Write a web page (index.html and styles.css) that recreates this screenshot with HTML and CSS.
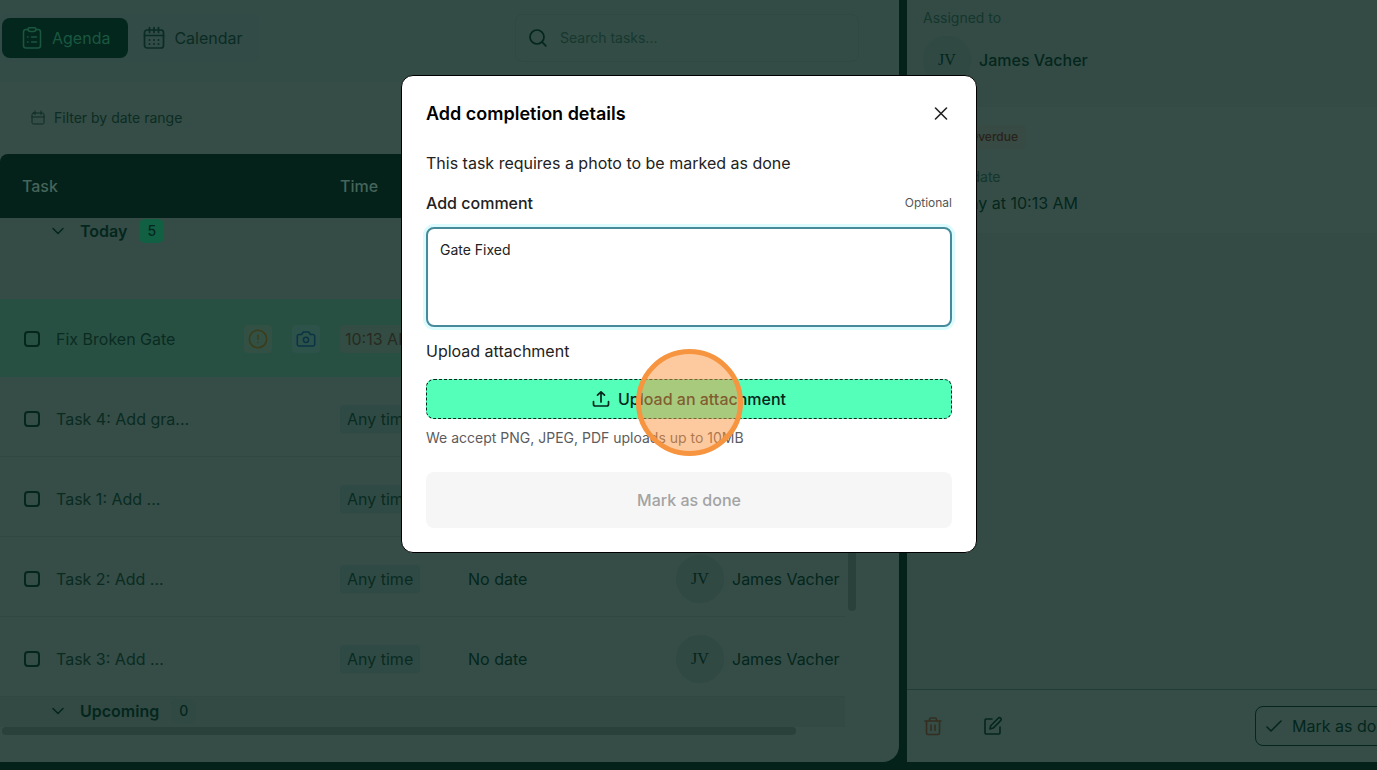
FILE: index.html
```html
<!DOCTYPE html>
<html lang="en">
<head>
    <meta charset="UTF-8">
    <meta name="viewport" content="width=device-width, initial-scale=1.0">
    <title>Agenda</title>
    <link rel="stylesheet" href="styles.css">
</head>
<body>

<div class="app">
    <!-- Task list -->
    <main class="tasks">
        <div class="topbar">
            <div class="tabs">
                <button type="button" class="tab active">
                    <svg width="24" height="24" viewBox="0 0 24 24" fill="none" stroke="currentColor" stroke-width="1.5" stroke-linecap="round" stroke-linejoin="round">
                        <path d="M8 3.500H6A2.500 2.500 0 0 0 3.500 6v13.500A2.500 2.500 0 0 0 6 22h12a2.500 2.500 0 0 0 2.500-2.500V6A2.500 2.500 0 0 0 18 3.500h-2"/>
                        <path d="M9.500 1.800h5A1.500 1.500 0 0 1 16 3.300c0 1.300-1 2.200-2.500 2.200h-3C9 5.500 8 4.600 8 3.300a1.500 1.500 0 0 1 1.500-1.500z"/>
                        <path d="M7.500 11h.5M7.500 16h.5M11.500 11h5M11.500 16h5"/>
                    </svg>
                    Agenda
                </button>
                <button type="button" class="tab">
                    <svg width="24" height="24" viewBox="0 0 24 24" fill="none" stroke="currentColor" stroke-width="1.700" stroke-linecap="round" stroke-linejoin="round">
                        <rect x="2.500" y="4" width="19" height="18" rx="2.500"/>
                        <path d="M2.500 9.500h19M7.500 1.500v5M12 1.500v5M16.500 1.500v5"/>
                        <path stroke-width="2" d="M7.500 14h.01M12 14h.01M16.500 14h.01M7.500 18h.01M12 18h.01M16.500 18h.01"/>
                    </svg>
                    Calendar
                </button>
            </div>
            <label class="search">
                <svg width="20" height="20" viewBox="0 0 20 20" fill="none" stroke="currentColor" stroke-width="1.700" stroke-linecap="round">
                    <circle cx="9" cy="9" r="7"/>
                    <path d="M14.200 14.200l3.600 3.600"/>
                </svg>
                <input type="search" placeholder="Search tasks..." aria-label="Search tasks">
            </label>
        </div>

        <div class="filters">
            <button type="button" class="filter">
                <svg width="16" height="16" viewBox="0 0 16 16" fill="none" stroke="currentColor" stroke-linecap="round" stroke-linejoin="round">
                    <rect x="2" y="3" width="12" height="11" rx="1.500"/>
                    <path d="M2 7h12M5 1v3.500M11 1v3.500"/>
                </svg>
                Filter by date range
            </button>
        </div>

        <div class="table-wrap">
            <table class="task-table">
                <colgroup>
                    <col class="col-task">
                    <col class="col-time">
                    <col class="col-date">
                    <col>
                </colgroup>
                <thead>
                    <tr><th class="first">Task</th><th>Time</th><th>Date</th><th>Assignee</th></tr>
                </thead>
                <tbody>
                    <tr class="group today">
                        <td colspan="4">
                            <div class="group-title">
                                <svg width="16" height="16" viewBox="0 0 16 16" fill="none" stroke="currentColor" stroke-width="1.500" stroke-linecap="round" stroke-linejoin="round"><path d="M3 5.500l5 5 5-5"/></svg>
                                Today <span class="count green">5</span>
                            </div>
                        </td>
                    </tr>
                    <tr class="row selected">
                        <td class="first">
                            <div class="task">
                                <input type="checkbox" aria-label="Fix Broken Gate">
                                <span class="name">Fix Broken Gate</span>
                                <span class="flag warning">
                                    <svg width="20" height="20" viewBox="0 0 20 20" fill="none" stroke="currentColor" stroke-width="1.500" stroke-linecap="round"><circle cx="10" cy="10" r="8.700"/><path d="M10 6v4.500M10 13.500v.01"/></svg>
                                </span>
                                <span class="flag photo">
                                    <svg width="20" height="20" viewBox="0 0 20 20" fill="none" stroke="currentColor" stroke-width="1.500" stroke-linejoin="round"><path d="M3 5.500h2.500L7.300 3h5.400l1.800 2.500H17A1.700 1.700 0 0 1 18.700 7.200v8A1.700 1.700 0 0 1 17 17H3a1.700 1.700 0 0 1-1.700-1.800v-8A1.700 1.700 0 0 1 3 5.500z"/><circle cx="10" cy="10.800" r="2.600"/></svg>
                                </span>
                            </div>
                        </td>
                        <td><span class="badge late">10:13 AM</span></td>
                        <td>Today</td>
                        <td><div class="person"><span class="avatar">JV</span>James Vacher</div></td>
                    </tr>
                    <tr class="row">
                        <td class="first"><div class="task"><input type="checkbox" aria-label="Task 4"><span class="name">Task 4: Add gra...</span></div></td>
                        <td><span class="badge">Any time</span></td>
                        <td>No date</td>
                        <td><div class="person"><span class="avatar">JV</span>James Vacher</div></td>
                    </tr>
                    <tr class="row">
                        <td class="first"><div class="task"><input type="checkbox" aria-label="Task 1"><span class="name">Task 1: Add ...</span></div></td>
                        <td><span class="badge">Any time</span></td>
                        <td>No date</td>
                        <td><div class="person"><span class="avatar">JV</span>James Vacher</div></td>
                    </tr>
                    <tr class="row">
                        <td class="first"><div class="task"><input type="checkbox" aria-label="Task 2"><span class="name">Task 2: Add ...</span></div></td>
                        <td><span class="badge">Any time</span></td>
                        <td>No date</td>
                        <td><div class="person"><span class="avatar">JV</span>James Vacher</div></td>
                    </tr>
                    <tr class="row">
                        <td class="first"><div class="task"><input type="checkbox" aria-label="Task 3"><span class="name">Task 3: Add ...</span></div></td>
                        <td><span class="badge">Any time</span></td>
                        <td>No date</td>
                        <td><div class="person"><span class="avatar">JV</span>James Vacher</div></td>
                    </tr>
                    <tr class="group upcoming">
                        <td colspan="4">
                            <div class="group-title">
                                <svg width="16" height="16" viewBox="0 0 16 16" fill="none" stroke="currentColor" stroke-width="1.500" stroke-linecap="round" stroke-linejoin="round"><path d="M3 5.500l5 5 5-5"/></svg>
                                Upcoming <span class="count">0</span>
                            </div>
                        </td>
                    </tr>
                </tbody>
            </table>
            <div class="scroll-y"><div class="thumb"></div></div>
        </div>
        <div class="scroll-x"><div class="thumb"></div></div>
    </main>

    <!-- Task details -->
    <aside class="details">
        <section class="assigned">
            <div class="small-label">Assigned to</div>
            <div class="person"><span class="avatar">JV</span>James Vacher</div>
        </section>
        <section class="due">
            <span class="overdue">
                <svg width="16" height="16" viewBox="0 0 20 20" fill="none" stroke="currentColor" stroke-width="1.500" stroke-linecap="round"><circle cx="10" cy="10" r="8"/><path d="M10 6v4.500M10 13.500v.01"/></svg>
                Overdue
            </span>
            <div class="small-label">Due date</div>
            <div class="due-date">Today at 10:13 AM</div>
        </section>
        <div class="details-body"></div>
        <footer class="details-footer">
            <button type="button" class="icon-btn delete" aria-label="Delete">
                <svg width="20" height="20" viewBox="0 0 20 20" fill="none" stroke="currentColor" stroke-width="1.600" stroke-linecap="round" stroke-linejoin="round"><path d="M2 5h16M6.500 5V3.500A1.500 1.500 0 0 1 8 2h4a1.500 1.500 0 0 1 1.500 1.500V5M3.500 5v12A1.500 1.500 0 0 0 5 18.500h10a1.500 1.500 0 0 0 1.500-1.500V5M8 9v5.500M12 9v5.500"/></svg>
            </button>
            <button type="button" class="icon-btn" aria-label="Edit">
                <svg width="20" height="20" viewBox="0 0 20 20" fill="none" stroke="currentColor" stroke-width="1.600" stroke-linecap="round" stroke-linejoin="round"><path d="M9 3H3.200A1.200 1.200 0 0 0 2 4.200v12.600A1.200 1.200 0 0 0 3.200 18h12.600a1.200 1.200 0 0 0 1.200-1.200V11"/><path d="M7 13l.7-3.300 7.500-7.500a1.600 1.600 0 0 1 2.400 0 1.600 1.600 0 0 1 0 2.400l-7.400 7.500z"/></svg>
            </button>
            <button type="button" class="done-btn">
                <svg width="16" height="16" viewBox="0 0 16 16" fill="none" stroke="currentColor" stroke-width="1.600" stroke-linecap="round" stroke-linejoin="round"><path d="M1 9l4 4L15 3"/></svg>
                Mark as done
            </button>
        </footer>
    </aside>
</div>

<!-- Completion modal -->
<div class="overlay">
    <form class="modal" role="dialog" aria-labelledby="modalTitle">
        <div class="modal-header">
            <h2 id="modalTitle">Add completion details</h2>
            <button type="button" class="close" aria-label="Close">
                <svg width="14" height="14" viewBox="0 0 14 14" fill="none" stroke="currentColor" stroke-width="1.600" stroke-linecap="round"><path d="M1.500 1l11 11M12.500 1l-11 11"/></svg>
            </button>
        </div>
        <p class="intro">This task requires a photo to be marked as done</p>
        <div class="label-row">
            <label for="comment">Add comment</label>
            <span class="optional">Optional</span>
        </div>
        <textarea id="comment" name="comment">Gate Fixed</textarea>
        <div class="upload-label">Upload attachment</div>
        <div class="upload">
            <button type="button" class="upload-btn">
                <svg width="18" height="18" viewBox="0 0 18 18" fill="none" stroke="currentColor" stroke-width="1.700" stroke-linecap="round" stroke-linejoin="round"><path d="M9 12V2M5.500 5.200L9 1.800l3.500 3.400M1.500 11.500v2.700A1.800 1.800 0 0 0 3.300 16h11.400a1.800 1.800 0 0 0 1.800-1.800v-2.700"/></svg>
                Upload an attachment
            </button>
            <span class="click-marker"></span>
        </div>
        <p class="hint">We accept PNG, JPEG, PDF uploads up to 10MB</p>
        <button type="submit" class="submit" disabled>Mark as done</button>
    </form>
</div>

</body>
</html>
```
FILE: styles.css
```css
* {
    box-sizing: border-box;
}
body {
    margin: 0;
    font-family: Inter, "Liberation Sans", sans-serif;
    font-size: 16px;
    line-height: 24px;
    color: #04261d;
    background-color: #04211a;
    overflow: hidden;
}
button, input, textarea {
    font: inherit;
    color: inherit;
}
button {
    display: flex;
    align-items: center;
    background: none;
    border: none;
    padding: 0;
    white-space: nowrap;
}
svg {
    flex: none;
    display: block;
}
.app {
    display: grid;
    grid-template-columns: minmax(0, 899fr) minmax(0, 470fr);
    gap: 8px;
    height: 100vh;
    padding-bottom: 8px;
}

/* task list */
.tasks {
    display: flex;
    flex-direction: column;
    min-width: 0;
    background-color: #354d46;
    border-radius: 0 0 16px 0;
    overflow: hidden;
}
.topbar {
    display: flex;
    justify-content: space-between;
    padding: 14px 40px 20px 0;
    background-color: #334c45;
}
.tabs {
    display: flex;
    padding: 4px 2px;
    background-color: #324b46;
    border-radius: 8px;
}
.tab {
    height: 40px;
    gap: 8px;
    padding: 0 14px;
    border-radius: 8px;
    color: #0a2c24;
}
.tab.active {
    padding: 0 18px;
    background-color: #03271d;
    color: #1b5740;
}
.search {
    display: flex;
    align-items: center;
    gap: 12px;
    width: 344px;
    padding: 0 12px;
    border: 1px solid #314943;
    border-radius: 8px;
}
.search input {
    flex: 1;
    min-width: 0;
    padding: 0;
    border: none;
    outline: none;
    background: none;
    font-size: 14px;
}
.search input::placeholder {
    color: #16382f;
    opacity: 1;
}
.filters {
    padding: 24px 30px;
}
.filter {
    height: 24px;
    gap: 8px;
    font-size: 14px;
    color: #0c2c23;
}
.table-wrap {
    flex: 1;
    display: flex;
    min-height: 0;
    padding-right: 43px;
    overflow: hidden;
}
.task-table {
    flex: 1;
    align-self: flex-start;
    min-width: 0;
    table-layout: fixed;
    border-collapse: separate;
    border-spacing: 0;
}
.col-task { width: 324px; }
.col-time { width: 128px; }
.col-date { width: 208px; }

.task-table th {
    height: 64px;
    padding: 0 16px;
    background-color: #04211a;
    color: #45655b;
    font-weight: 500;
    text-align: left;
}
.task-table th.first {
    padding-left: 22px;
    border-radius: 8px 0 0 0;
}
.task-table td {
    padding: 0 0 0 16px;
}
.task-table td.first {
    padding: 0 4px 0 24px;
}
.task-table .row td {
    height: 80px;
    padding-top: 4px;
    border-bottom: 1px solid #2f4841;
    white-space: nowrap;
}
.task-table .selected td {
    padding-top: 3px;
    border-top: 2px solid #354d46;
    border-bottom-color: #285042;
    background-color: #285042;
}
.task-table .group td {
    padding: 0 0 0 50px;
    vertical-align: top;
    background-color: #344c45;
}
.group.today td {
    height: 79px;
}
.task-table .upcoming td {
    height: 30px;
    background-color: #324a43;
}
.group-title {
    display: flex;
    align-items: center;
    gap: 14px;
    height: 26px;
    font-weight: 600;
}
.upcoming .group-title {
    height: 28px;
}
.count {
    height: 24px;
    padding: 0 8px;
    margin-left: -2px;
    border-radius: 6px;
    background-color: #304943;
    font-size: 14px;
    font-weight: 500;
}
.count.green {
    background-color: #126044;
}
.task {
    display: flex;
    align-items: center;
    gap: 20px;
    color: #0a2b22;
}
.task input {
    appearance: none;
    width: 16px;
    height: 16px;
    margin: 0 -4px 0 0;
    border: 2px solid #04261d;
    border-radius: 4px;
}
.name {
    flex: 1;
}
.flag {
    display: flex;
    align-items: center;
    justify-content: center;
    width: 28px;
    height: 28px;
    border-radius: 4px;
}
.warning {
    background-color: #325044;
    color: #3c3c18;
}
.photo {
    background-color: #2d524a;
    color: #0a3444;
}
.badge {
    display: inline-block;
    height: 28px;
    line-height: 28px;
    padding: 0 7px;
    border-radius: 4px;
    background-color: #2f4a44;
    color: #0a2b22;
}
.badge.late {
    padding: 0 5px;
    background-color: #334d44;
    color: #282a1f;
}
.person {
    display: flex;
    align-items: center;
    gap: 8px;
    white-space: nowrap;
}
.avatar {
    display: flex;
    flex: none;
    align-items: center;
    justify-content: center;
    width: 48px;
    height: 48px;
    border-radius: 50%;
    background-color: #304943;
    font-family: "Liberation Serif", serif;
}
/* scrollbars */
.scroll-y {
    flex: none;
    width: 11px;
    padding-left: 3px;
}
.scroll-y .thumb {
    width: 8px;
    height: 457px;
    border-radius: 4px;
    background-color: #29413a;
}
.scroll-x {
    height: 35px;
    padding-left: 2px;
}
.scroll-x .thumb {
    width: 794px;
    height: 8px;
    border-radius: 4px;
    background-color: #29413a;
}

/* task details */
.details {
    display: flex;
    flex-direction: column;
    min-width: 520px;
    background-color: #354d46;
}
.assigned {
    padding: 6px 16px 23px;
    background-color: #334b44;
}
.assigned .person {
    margin-top: 6px;
    font-weight: 500;
}
.small-label {
    font-size: 14px;
    color: #14362d;
}
.due {
    padding: 18px 34px;
}
.overdue {
    display: flex;
    align-items: center;
    gap: 4px;
    width: max-content;
    height: 24px;
    padding: 0 8px;
    border-radius: 4px;
    background-color: #374a43;
    font-size: 12px;
    font-weight: 500;
    color: #29221a;
}
.due .small-label {
    margin-top: 16px;
}
.due-date {
    margin-top: 2px;
}
.details-body {
    flex: 1;
    background-color: #334b44;
}
.details-footer {
    display: flex;
    align-items: center;
    gap: 40px;
    padding: 16px;
    border-top: 1px solid #223d35;
}
.delete {
    color: #352e20;
}
.done-btn {
    gap: 10px;
    height: 40px;
    width: 156px;
    margin-left: auto;
    padding: 0 10px;
    border: 1px solid #04261d;
    border-radius: 8px;
}

/* modal */
.overlay {
    position: fixed;
    inset: 0;
    display: flex;
    justify-content: center;
    align-items: flex-start;
    padding: 75px 0 0 1px;
}
.modal {
    width: 576px;
    padding: 24px;
    background-color: #fff;
    border: 1px solid #000;
    border-radius: 12px;
    color: #222;
}
.modal-header {
    display: flex;
    align-items: center;
    justify-content: space-between;
    height: 27px;
}
.modal h2 {
    margin: 0;
    font-size: 18px;
    font-weight: 600;
    color: #000;
}
.close {
    padding: 4px;
}
.modal p {
    margin: 0;
}
.modal .intro {
    margin: 24px 0 16px;
}
.label-row {
    display: flex;
    justify-content: space-between;
    font-weight: 500;
}
.optional {
    font-size: 12px;
    font-weight: 400;
    color: #555;
}
.modal textarea {
    display: block;
    width: 100%;
    height: 100px;
    margin: 12px 0;
    padding: 10px 12px;
    border: 2px solid #478a9c;
    border-radius: 8px;
    outline: none;
    box-shadow: 0 0 0 3px #dcfbfc;
    resize: none;
    font-size: 14px;
    line-height: 22px;
}
.upload {
    position: relative;
    margin: 16px 0 9px;
}
.upload-btn {
    justify-content: center;
    gap: 8px;
    width: 100%;
    height: 40px;
    border: 1px dashed #04261d;
    border-radius: 8px;
    background-color: #54ffb9;
    color: #04261d;
    font-weight: 500;
}
/* ring over the clicked spot */
.click-marker {
    position: absolute;
    top: -30px;
    left: calc(50% - 53px);
    width: 107px;
    height: 107px;
    border: 5px solid #f69440;
    border-radius: 50%;
    background-color: rgba(251, 149, 65, 0.5);
    pointer-events: none;
}
.modal .hint {
    font-size: 14px;
    line-height: 20px;
    color: #5c5c5c;
}
.submit {
    justify-content: center;
    width: 100%;
    height: 56px;
    margin-top: 24px;
    border-radius: 8px;
    background-color: #f6f6f6;
    color: #a3a3a3;
    font-weight: 500;
}
```
